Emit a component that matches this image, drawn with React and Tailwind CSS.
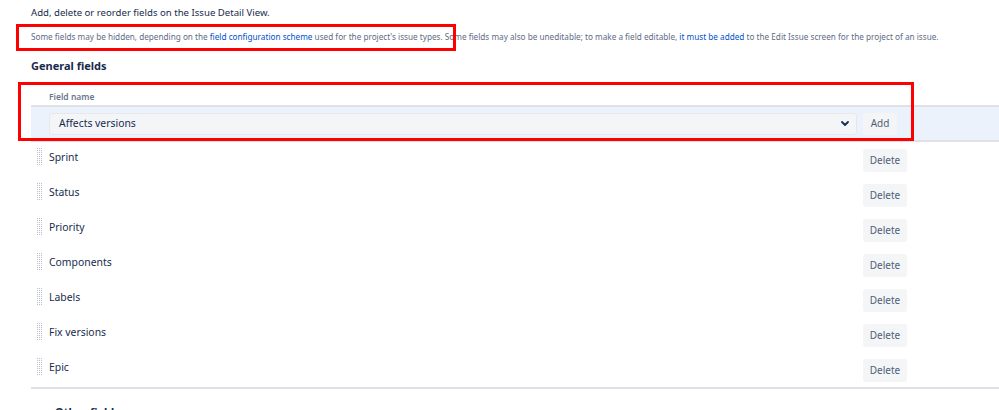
import React from "react";

const rows = ["Sprint", "Status", "Priority", "Components", "Labels", "Fix versions", "Epic"];

function Grip() {
  const dots = [];
  for (let y = 0; y < 9; y++) {
    for (let x = 0; x < 3; x++) {
      dots.push(<rect key={`${x}-${y}`} x={x * 2} y={y * 2} width="1" height="1" fill="#b8bfca" />);
    }
  }
  return (
    <svg width="6" height="18" viewBox="0 0 6 18" className="shrink-0">
      {dots}
    </svg>
  );
}

function Chevron() {
  return (
    <svg width="8" height="5" viewBox="0 0 8 5" className="shrink-0">
      <path d="M1 1 L4 4 L7 1" fill="none" stroke="#172b4d" strokeWidth="1.8" strokeLinecap="round" strokeLinejoin="round" />
    </svg>
  );
}

export default function App() {
  return (
    <div
      className="relative w-[999px] h-[410px] overflow-hidden bg-white text-[#172b4d]"
      style={{ fontFamily: '"Noto Sans", "Open Sans", sans-serif' }}
    >
      <div className="pl-[31px] pt-[4px]">
        <p className="text-[9.6px] leading-[18px]">Add, delete or reorder fields on the Issue Detail View.</p>
        <p className="mt-[8px] text-[8.2px] leading-[14px] text-[#5e6c84] whitespace-nowrap">
          Some fields may be hidden, depending on the{" "}
          <span className="text-[#0052cc]">field configuration scheme</span> used for the project's issue types. Some
          fields may also be uneditable; to make a field editable,{" "}
          <span className="text-[#0052cc]">it must be added</span> to the Edit Issue screen for the project of an issue.
        </p>
        <h2 className="mt-[13px] text-[11px] leading-[18px] font-bold">General fields</h2>

        <div className="mt-[14px] w-[1000px]">
          <div className="h-[18px] pl-[18px] text-[8.5px] leading-[16px] font-semibold text-[#6b778c] border-b-2 border-[#dfe1e6]">
            Field name
          </div>
          <div className="flex items-center h-[35px] bg-[#ebf2fc] border-b-2 border-[#dfe1e6]">
            <div className="ml-[18px] w-[808px] h-[22px] flex items-center justify-between pl-[9px] pr-[7px] bg-[#f4f5f7] border border-[#e6e8ec] rounded-[3px] text-[10.4px]">
              <span>Affects versions</span>
              <Chevron />
            </div>
            <button className="ml-[6px] h-[22px] w-[34px] rounded-[3px] bg-[#f4f5f7] text-[10px] text-[#505f79]">
              Add
            </button>
          </div>
          {rows.map((r) => (
            <div key={r} className="flex h-[35px]">
              <div className="flex items-start w-[832px] pt-[6px]">
                <div className="ml-[6px] w-[12px]">
                  <Grip />
                </div>
                <span className="text-[10.4px] leading-[18px]">{r}</span>
              </div>
              <div className="pt-[4px]">
                <button className="h-[23px] w-[44px] rounded-[3px] bg-[#f4f5f7] text-[10px] text-[#505f79]">
                  Delete
                </button>
              </div>
            </div>
          ))}
          <div className="border-t-2 border-[#dfe1e6]" />
        </div>
        <h2 className="mt-[14px] pl-[24px] text-[11px] leading-[18px] font-bold">Other fields</h2>
      </div>

      <div className="absolute left-[16px] top-[24px] w-[440px] h-[27px] border-[3px] border-[#ff0000]" />
      <div className="absolute left-[18px] top-[82px] w-[896px] h-[59px] border-[3px] border-[#ff0000]" />
    </div>
  );
}
